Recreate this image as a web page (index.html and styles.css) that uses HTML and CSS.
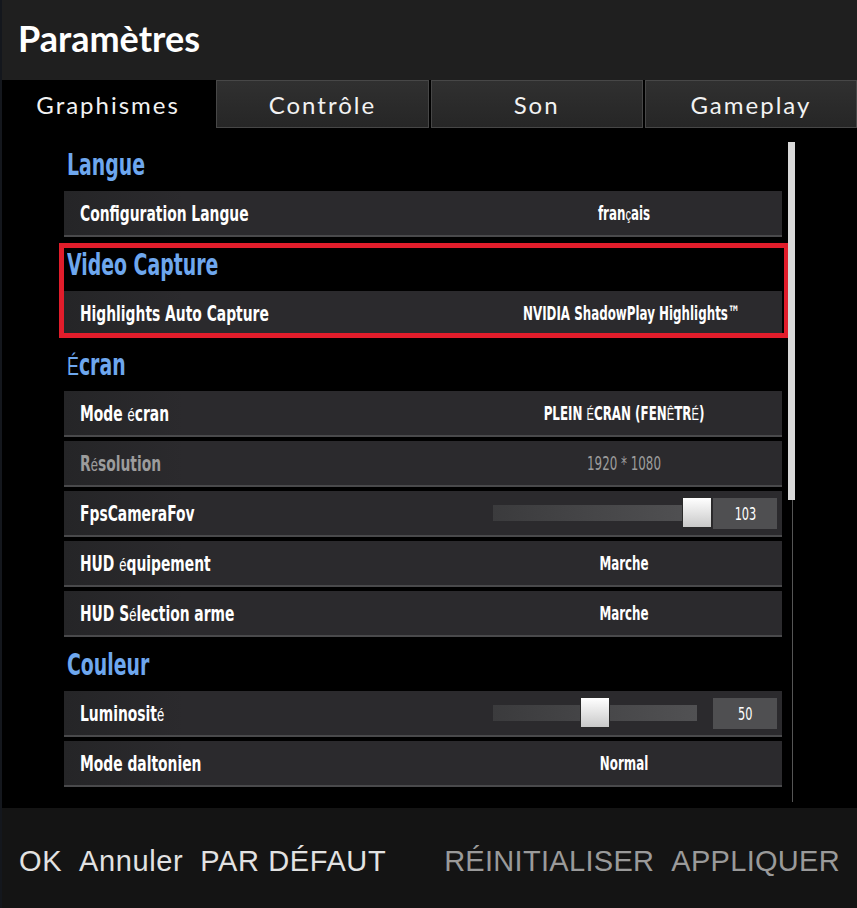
FILE: index.html
```html
<!DOCTYPE html>
<html lang="fr">

<head>
  <meta charset="UTF-8">
  <meta name="viewport" content="width=device-width, initial-scale=1.0">
  <title>Paramètres</title>
  <link rel="stylesheet" href="styles.css">
</head>

<body>
  <div class="window">
    <header class="title-bar">
      <h1>Paramètres</h1>
    </header>

    <nav class="tabs">
      <button class="tab active">Graphismes</button>
      <button class="tab">Contrôle</button>
      <button class="tab">Son</button>
      <button class="tab">Gameplay</button>
    </nav>

    <main class="content">
      <div class="list">
        <h2 class="section"><span class="squeeze">Langue</span></h2>
        <div class="row">
          <span class="label">Configuration Langue</span>
          <span class="value">fran<span class="alt">ç</span>ais</span>
        </div>

        <div class="highlight">
          <h2 class="section"><span class="squeeze">Video Capture</span></h2>
          <div class="row">
            <span class="label">Highlights Auto Capture</span>
            <span class="value">NVIDIA ShadowPlay Highlights™</span>
          </div>
        </div>

        <h2 class="section"><span class="squeeze"><span class="alt">É</span>cran</span></h2>
        <div class="row">
          <span class="label">Mode <span class="alt">é</span>cran</span>
          <span class="value">PLEIN <span class="alt">É</span>CRAN (FEN<span class="alt">Ê</span>TR<span class="alt">É</span>)</span>
        </div>
        <div class="row disabled">
          <span class="label">R<span class="alt">é</span>solution</span>
          <span class="value">1920 * 1080</span>
        </div>
        <div class="row">
          <span class="label">FpsCameraFov</span>
          <div class="slider">
            <div class="track"><div class="thumb" style="left: 189px"></div></div>
            <span class="num"><span class="squeeze">103</span></span>
          </div>
        </div>
        <div class="row">
          <span class="label">HUD <span class="alt">é</span>quipement</span>
          <span class="value">Marche</span>
        </div>
        <div class="row">
          <span class="label">HUD S<span class="alt">é</span>lection arme</span>
          <span class="value">Marche</span>
        </div>

        <h2 class="section"><span class="squeeze">Couleur</span></h2>
        <div class="row">
          <span class="label">Luminosit<span class="alt">é</span></span>
          <div class="slider">
            <div class="track"><div class="thumb" style="left: 87px"></div></div>
            <span class="num"><span class="squeeze">50</span></span>
          </div>
        </div>
        <div class="row">
          <span class="label">Mode daltonien</span>
          <span class="value">Normal</span>
        </div>
      </div>

      <div class="scrollbar">
        <div class="scroll-thumb"></div>
      </div>
    </main>

    <footer class="actions">
      <div class="group">
        <button class="action">OK</button>
        <button class="action">Annuler</button>
        <button class="action">PAR DÉFAUT</button>
      </div>
      <div class="group">
        <button class="action muted">RÉINITIALISER</button>
        <button class="action muted">APPLIQUER</button>
      </div>
    </footer>
  </div>
</body>

</html>
```

FILE: styles.css
```css
body {
  margin: 0;
  background: #14171d;
  font-family: 'Liberation Sans', Arial, sans-serif;
}

.window {
  width: 855px;
  margin-left: 2px;
  background: #000;
}

.title-bar {
  height: 80px;
  background: #1f1f1f;
  display: flex;
  align-items: center;
}

.title-bar h1 {
  margin: 0 0 0 16px;
  font-family: 'Lato', sans-serif;
  font-weight: 700;
  font-size: 36px;
  color: #fff;
  padding-bottom: 4px;
}

.tabs {
  display: grid;
  grid-template-columns: repeat(4, 1fr);
  gap: 2px;
  height: 48px;
  background: #000;
}

.tab {
  font-family: 'Lato', sans-serif;
  font-size: 24px;
  letter-spacing: 2px;
  color: #f2f2f2;
  background: linear-gradient(#303030, #262626);
  border: 1px solid #474747;
  padding: 0;
  cursor: pointer;
}

.tab.active {
  background: #000;
  border-color: #000;
}

.content {
  height: 680px;
  display: flex;
  padding-left: 62px;
  box-sizing: border-box;
}

.list {
  width: 718px;
  padding-top: 13px;
}

/* the game font is a tall condensed face, none installed, so squeeze a bold sans */
.squeeze {
  display: inline-block;
  transform: scaleX(0.7);
  transform-origin: left center;
}

.section {
  margin: 0;
  height: 50px;
  line-height: 48px;
  padding-left: 3px;
  font-family: 'Liberation Sans Narrow', 'DejaVu Sans Condensed', sans-serif;
  font-weight: 700;
  font-size: 30px;
  color: #6ea7ee;
}

.row {
  display: grid;
  grid-template-columns: 1fr 312px;
  align-items: center;
  height: 44px;
  margin-bottom: 4px;
  background: linear-gradient(90deg, #252527, #2b2a2d 120px);
  border-bottom: 2px solid #4a4a4c;
  font-family: 'Liberation Sans Narrow', 'DejaVu Sans Condensed', sans-serif;
  font-weight: 700;
  color: #fff;
}

.label {
  padding-left: 16px;
  font-size: 22px;
  transform: scaleX(0.7);
  transform-origin: 16px center;
  white-space: nowrap;
}

.value {
  text-align: center;
  font-size: 20px;
  padding-right: 6px;
  transform: scaleX(0.66);
  white-space: nowrap;
}

.row.disabled {
  color: #9c9c9c;
}

.row.disabled .value {
  font-weight: 400;
}

.alt {
  font-family: 'Liberation Sans', Arial, sans-serif;
  font-weight: 400;
  font-size: 0.85em;
}

.slider {
  display: flex;
  align-items: center;
  padding-left: 23px;
}

.track {
  position: relative;
  width: 204px;
  height: 16px;
  background: linear-gradient(90deg, #3b3b3d, #515153);
}

.thumb {
  position: absolute;
  top: -8px;
  width: 28px;
  height: 29px;
  border: 1px solid #2a2a2a;
  background: linear-gradient(#ffffff, #c9c9c9);
}

.num {
  margin-left: 16px;
  width: 64px;
  height: 31px;
  line-height: 31px;
  text-align: center;
  background: #4f4f51;
  font-size: 18px;
  font-weight: 400;
}

.num .squeeze {
  transform-origin: center;
}

.highlight {
  position: relative;
}

.highlight::after {
  content: '';
  position: absolute;
  left: -5px;
  right: -7px;
  top: 2px;
  bottom: -1px;
  border: 5px solid #e11d2b;
  pointer-events: none;
}

.scrollbar {
  position: relative;
  width: 7px;
  margin: 14px 0 0 6px;
  height: 660px;
}

.scrollbar::before {
  content: '';
  position: absolute;
  left: 4px;
  top: 0;
  bottom: 0;
  width: 1px;
  background: #555;
}

.scroll-thumb {
  position: relative;
  height: 358px;
  background: #d9d9d9;
}

.actions {
  height: 100px;
  background: #141414;
  display: flex;
  justify-content: space-between;
  align-items: center;
  padding: 6px 17px 0 17px;
  box-sizing: border-box;
}

.group {
  display: flex;
  gap: 17px;
}

.action {
  background: none;
  border: none;
  padding: 0;
  font-family: 'Liberation Sans', Arial, sans-serif;
  font-size: 29px;
  letter-spacing: 0.6px;
  color: #e2e2e2;
  cursor: pointer;
}

.action.muted {
  color: #9a9a9a;
  letter-spacing: 0.3px;
}

.action:hover {
  color: #6ea7ee;
}
```
